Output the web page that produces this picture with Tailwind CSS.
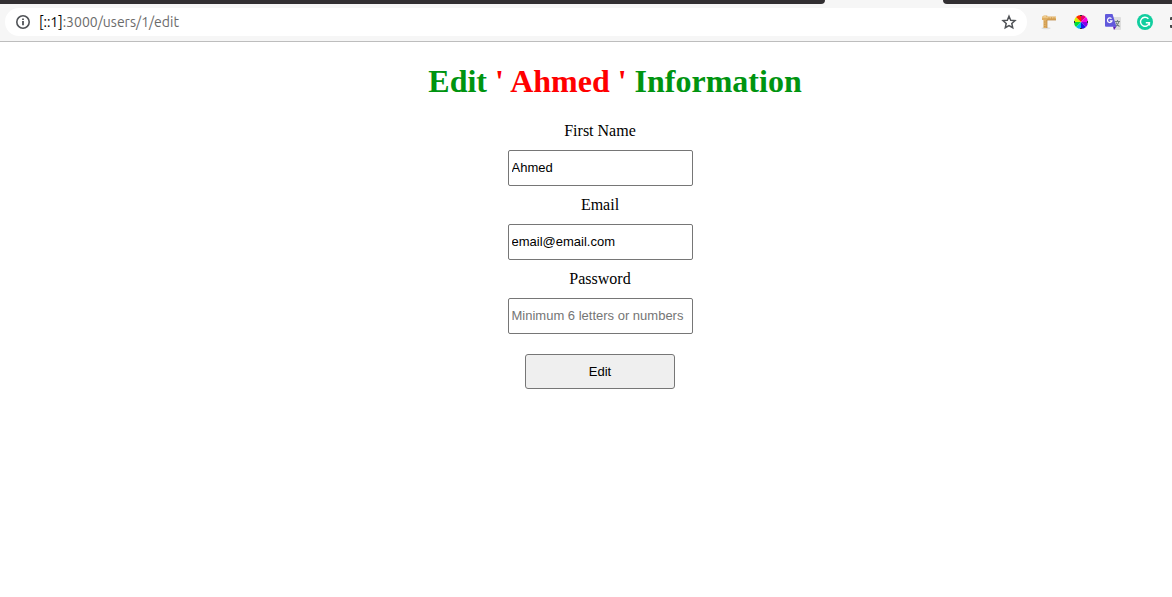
<!DOCTYPE html>
<html lang="en">
<head>
<meta charset="utf-8">
<meta name="viewport" content="width=device-width, initial-scale=1">
<title>Edit user</title>
<script src="https://cdn.jsdelivr.net/npm/@tailwindcss/browser@4"></script>
</head>
<body class="bg-white text-black font-['Liberation_Serif',serif] overflow-x-hidden">
<header class="bg-[#f6f6f6] border-b border-[#bdbdbd]">
  <div class="flex h-1">
    <div class="flex-1 bg-[#322f32] rounded-br-[8px]"></div>
    <div class="w-[118px]"></div>
    <div class="w-[229px] bg-[#322f32] rounded-bl-[8px]"></div>
  </div>
  <div class="flex items-center pt-1 pb-[5px] pl-[5px] overflow-hidden">
    <div class="flex flex-1 items-center h-7 rounded-full bg-white pl-[10px] pr-[10px]">
      <button type="button" aria-label="Site information" class="shrink-0">
        <svg class="block size-4" viewBox="0 0 16 16" fill="none"><circle cx="8" cy="8" r="6.2" stroke="#505357" stroke-width="1.6"/><path d="M7.1 7h1.8v4.3H7.1zM7.1 4.4h1.8v1.7H7.1z" fill="#505357"/></svg>
      </button>
      <div role="textbox" aria-label="Address" class="flex-1 ml-2 text-[14px] leading-5 text-[#6b6b6b] font-['Ubuntu','Noto_Sans',sans-serif]"><span class="text-black">[::1]</span>:3000/users/1/edit</div>
      <button type="button" aria-label="Bookmark this page" class="shrink-0">
        <svg class="block size-4" viewBox="0 0 16 16" fill="none" stroke="#505357" stroke-width="1.5"><path d="M8 2.2l1.7 4 4.3.4-3.2 2.9.9 4.2L8 11.5l-3.7 2.2.9-4.2L2 6.6l4.3-.4z"/></svg>
      </button>
    </div>
    <div class="flex shrink-0 items-center gap-4 ml-[14px]">
      <button type="button" aria-label="Page ruler">
        <svg class="block size-4" viewBox="0 0 16 16"><ellipse cx="5" cy="14.3" rx="4.5" ry="1" fill="#dedede"/><path d="M1 2.5h1.5V1.5h3.8v1H15V6H6v8H2.4V6H1z" fill="#dfae63"/><path d="M1.2 2.7H3V2h2.2v.9H15v.9H1.2z" fill="#f1ce90"/><path d="M5.8 6H15M6 6v8" stroke="#b78035" stroke-width=".7"/><path d="M8 3.2v1.5M10.5 3.2v1.5M13 3.2v1.5M3 8h1.5M3 10.3h1.5M3 12.5h1.5" stroke="#bd8840" stroke-width=".6"/></svg>
      </button>
      <button type="button" aria-label="Colour picker">
        <svg class="block size-4" viewBox="0 0 16 16"><g transform="translate(8 8)"><path d="M0 0V-7A7 7 0 0 1 5-5z" fill="#e60073"/><path d="M0 0L5-5A7 7 0 0 1 7 0z" fill="#f000e8"/><path d="M0 0H7A7 7 0 0 1 5 5z" fill="#8a00e6"/><path d="M0 0L5 5A7 7 0 0 1 0 7z" fill="#1c13ea"/><path d="M0 0V7A7 7 0 0 1-5 5z" fill="#00b8ed"/><path d="M0 0L-5 5A7 7 0 0 1-7 0z" fill="#00dc38"/><path d="M0 0H-7A7 7 0 0 1-5-5z" fill="#d9f000"/><path d="M0 0L-5-5A7 7 0 0 1 0-7z" fill="#ff2a00"/><path d="M-1-7h2v1h-2zM-1 6h2v1h-2zM-7-1h1v2h-1zM6-1h1v2h-1z" fill="#333"/></g></svg>
      </button>
      <button type="button" aria-label="Translate">
        <svg class="block size-4" viewBox="0 0 16 16" fill="none"><path d="M6 3h9.2q.8 0 .8.8v11.4q0 .8-.8.8H9z" fill="#dedede"/><path d="M10 7.5h5M12.5 6v1.5M14 7.5c-.5 2.5-2 4-3.5 5M11 8.5c.7 1.8 2 3 3.5 4" stroke="#728080" stroke-width="1.1"/><path d="M8 12.5h3.4L9 16z" fill="#5e18b5"/><path d="M1 0h6.5L11.5 12.7H1q-1 0-1-1V1q0-1 1-1z" fill="#6159db"/><path d="M6.5 4.7A2.3 2.3 0 1 0 7 6.8H4.8" stroke="#fff" stroke-width="1.2"/></svg>
      </button>
      <button type="button" aria-label="Writing assistant">
        <svg class="block size-4" viewBox="0 0 16 16" fill="none"><circle cx="8" cy="8" r="8" fill="#11ce9f"/><path d="M11.4 4.8A4.5 4.5 0 1 0 12.4 8.8H8.8M12.4 8.8v2.7" stroke="#fff" stroke-width="1.4"/></svg>
      </button>
      <button type="button" aria-label="More extensions" class="w-[3px] overflow-hidden">
        <svg class="block size-4 max-w-none" viewBox="0 0 16 16" fill="#47484a"><path d="M1 4q0-1 1-1h3v3H1zM1 11h4v3H2q-1 0-1-1z"/></svg>
      </button>
    </div>
  </div>
</header>
<main class="pt-[21px] pb-8">
  <h1 class="pl-[58px] text-center text-[32px] leading-9 font-bold text-[#009410]">Edit <span class="text-[#ff0000]">' Ahmed '</span> Information</h1>
  <form class="mt-[23px] pl-7 flex flex-col items-center gap-[10px] text-[16px] leading-[18px]">
    <label for="first-name">First Name</label>
    <input id="first-name" type="text" value="Ahmed" class="w-[185px] h-9 px-[3px] pb-[2px] border border-[#767676] rounded-[2px] bg-white text-[13px] font-['Liberation_Sans',sans-serif]">
    <label for="email">Email</label>
    <input id="email" type="email" value="email@email.com" class="w-[185px] h-9 px-[3px] pb-[2px] border border-[#767676] rounded-[2px] bg-white text-[13px] font-['Liberation_Sans',sans-serif]">
    <label for="password">Password</label>
    <input id="password" type="password" placeholder="Minimum 6 letters or numbers" class="w-[185px] h-9 px-[3px] pb-[2px] border border-[#767676] rounded-[2px] bg-white text-[13px] font-['Liberation_Sans',sans-serif] placeholder:text-[#757575]">
    <button type="submit" class="mt-[10px] w-[150px] h-[35px] border border-[#767676] rounded-[3px] bg-[#efefef] text-[13px] font-['Liberation_Sans',sans-serif]">Edit</button>
  </form>
</main>
</body>
</html>
